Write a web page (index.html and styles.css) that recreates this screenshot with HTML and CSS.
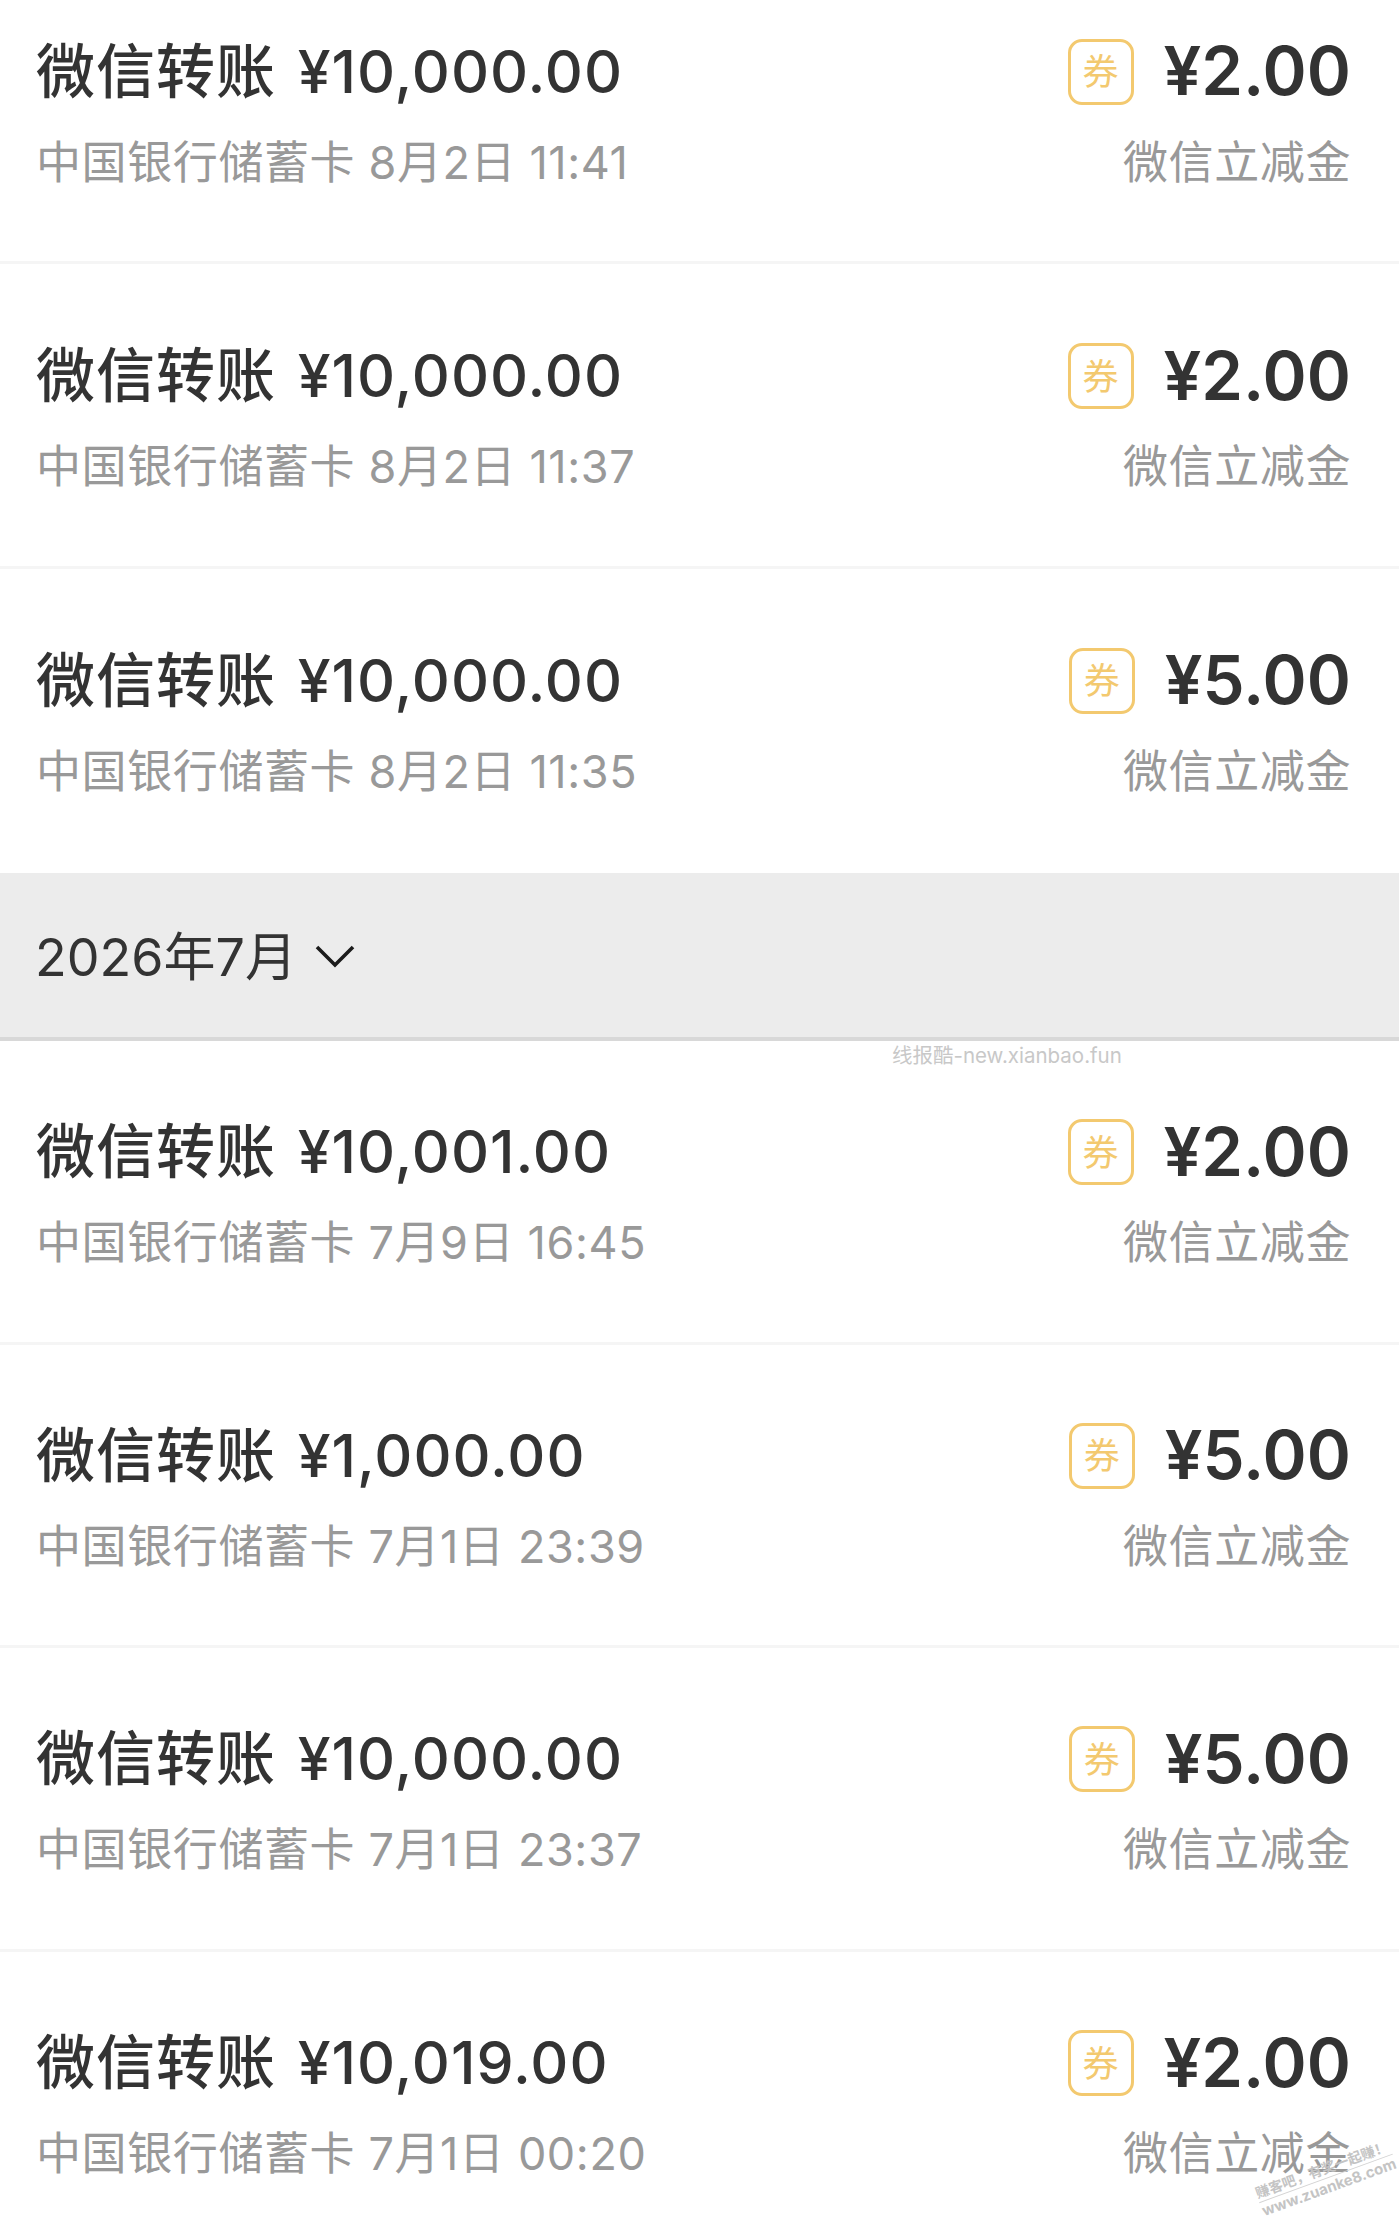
FILE: index.html
```html
<!DOCTYPE html>
<html lang="zh-CN">
<head>
    <meta charset="UTF-8">
    <meta name="viewport" content="width=device-width, initial-scale=1.0">
    <title>账单</title>
    <link rel="stylesheet" href="styles.css">
</head>
<body>

    <div class="page">
        <div class="bill-list">
            <div class="bill-row">
                <div class="bill-left">
                    <div class="bill-title">微信转账 ¥10,000.00</div>
                    <div class="bill-sub">中国银行储蓄卡 8月2日 11:41</div>
                </div>
                <div class="bill-right">
                    <div class="bill-amount-line"><span class="coupon">券</span><span class="amount">¥2.00</span></div>
                    <div class="bill-sub">微信立减金</div>
                </div>
            </div>
            <div class="bill-row">
                <div class="bill-left">
                    <div class="bill-title">微信转账 ¥10,000.00</div>
                    <div class="bill-sub">中国银行储蓄卡 8月2日 11:37</div>
                </div>
                <div class="bill-right">
                    <div class="bill-amount-line"><span class="coupon">券</span><span class="amount">¥2.00</span></div>
                    <div class="bill-sub">微信立减金</div>
                </div>
            </div>
            <div class="bill-row last">
                <div class="bill-left">
                    <div class="bill-title">微信转账 ¥10,000.00</div>
                    <div class="bill-sub">中国银行储蓄卡 8月2日 11:35</div>
                </div>
                <div class="bill-right">
                    <div class="bill-amount-line"><span class="coupon">券</span><span class="amount">¥5.00</span></div>
                    <div class="bill-sub">微信立减金</div>
                </div>
            </div>
        </div>

        <div class="month-bar">
            <span>2026年7月</span>
            <svg class="chevron" width="40" height="24" viewBox="0 0 40 24"><path d="M2 3 L20 21 L38 3" fill="none" stroke="#1c1c1c" stroke-width="3.6"/></svg>
        </div>

        <div class="bill-row">
            <div class="bill-left">
                <div class="bill-title">微信转账 ¥10,001.00</div>
                <div class="bill-sub">中国银行储蓄卡 7月9日 16:45</div>
            </div>
            <div class="bill-right">
                <div class="bill-amount-line"><span class="coupon">券</span><span class="amount">¥2.00</span></div>
                <div class="bill-sub">微信立减金</div>
            </div>
        </div>
        <div class="bill-row">
            <div class="bill-left">
                <div class="bill-title">微信转账 ¥1,000.00</div>
                <div class="bill-sub">中国银行储蓄卡 7月1日 23:39</div>
            </div>
            <div class="bill-right">
                <div class="bill-amount-line"><span class="coupon">券</span><span class="amount">¥5.00</span></div>
                <div class="bill-sub">微信立减金</div>
            </div>
        </div>
        <div class="bill-row">
            <div class="bill-left">
                <div class="bill-title">微信转账 ¥10,000.00</div>
                <div class="bill-sub">中国银行储蓄卡 7月1日 23:37</div>
            </div>
            <div class="bill-right">
                <div class="bill-amount-line"><span class="coupon">券</span><span class="amount">¥5.00</span></div>
                <div class="bill-sub">微信立减金</div>
            </div>
        </div>
        <div class="bill-row">
            <div class="bill-left">
                <div class="bill-title">微信转账 ¥10,019.00</div>
                <div class="bill-sub">中国银行储蓄卡 7月1日 00:20</div>
            </div>
            <div class="bill-right">
                <div class="bill-amount-line"><span class="coupon">券</span><span class="amount">¥2.00</span></div>
                <div class="bill-sub">微信立减金</div>
            </div>
        </div>

        <div class="mark-top">线报酷-new.xianbao.fun</div>
        <div class="mark-corner">
            <div class="mark-cn">赚客吧，有奖一起赚！</div>
            <div class="mark-en">www.zuanke8.com</div>
        </div>
    </div>

</body>
</html>
```

FILE: styles.css
```css
html, body {
    margin: 0;
    padding: 0;
    background-color: #ffffff;
}

.page {
    position: relative;
    width: 1399px;
    height: 2235px;
    overflow: hidden;
    font-family: Inter, "Noto Sans CJK SC", sans-serif;
    color: #333333;
}

.bill-list {
    margin-top: -40.5px;
}

.bill-row {
    display: flex;
    justify-content: space-between;
    box-sizing: border-box;
    height: 303.7px;
    padding: 79px 48px 0 36px;
    border-bottom: 3px solid #f5f5f5;
}

.bill-list .bill-row {
    height: 304.5px;
    padding-top: 80px;
}

.bill-row.last {
    border-bottom: none;
}

.bill-title {
    height: 64px;
    line-height: 64px;
    font-size: 59px;
    font-weight: 500;
    letter-spacing: 1px;
    word-spacing: 5px;
    white-space: nowrap;
}

.bill-sub {
    height: 64px;
    margin-top: 27px;
    line-height: 64px;
    font-size: 45px;
    letter-spacing: 0.6px;
    color: #999999;
    white-space: nowrap;
}

.bill-right {
    display: flex;
    flex-direction: column;
    align-items: flex-end;
}

.bill-amount-line {
    display: flex;
    align-items: center;
    height: 64px;
}

.coupon {
    display: flex;
    align-items: center;
    justify-content: center;
    box-sizing: border-box;
    width: 66px;
    height: 66px;
    margin-right: 30px;
    padding-bottom: 5px;
    border: 3px solid #f3c96f;
    border-radius: 14px;
    font-size: 36px;
    color: #f3c96f;
}

.amount {
    padding-bottom: 1px;
    font-size: 67px;
    font-weight: 600;
    line-height: 64px;
}

.month-bar {
    display: flex;
    align-items: center;
    box-sizing: border-box;
    height: 168px;
    padding: 0 0 4px 35px;
    background-color: #ececec;
    border-bottom: 4px solid #d8d8d8;
    font-size: 52px;
}

.chevron {
    margin-left: 18px;
    margin-top: 6px;
}

.mark-top {
    position: absolute;
    left: 892px;
    top: 1044px;
    font-size: 20.5px;
    line-height: 24px;
    color: #c8c8c8;
    white-space: nowrap;
}

.mark-corner {
    position: absolute;
    left: 1255px;
    top: 2160px;
    transform: rotate(-20deg);
    color: #c4c4c4;
    white-space: nowrap;
}

.mark-cn {
    font-size: 14px;
    line-height: 18px;
    font-weight: 700;
    border-bottom: 1px solid #d4d4d4;
}

.mark-en {
    font-size: 15px;
    line-height: 18px;
    font-weight: 700;
}
```
